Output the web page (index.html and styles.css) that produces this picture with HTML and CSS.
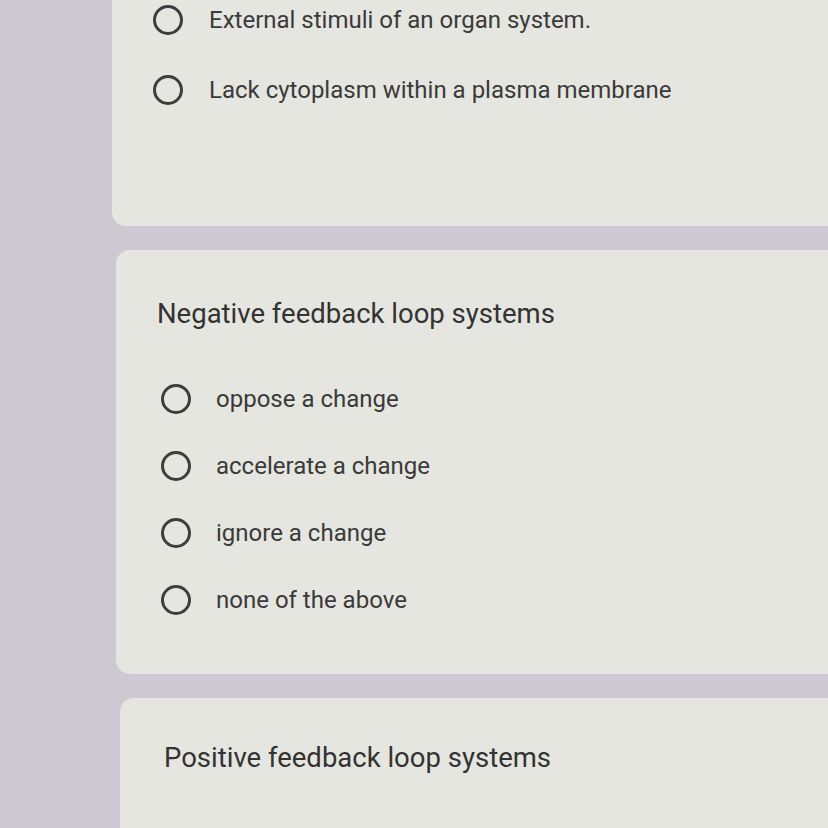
FILE: index.html
```html
<!DOCTYPE html>
<html lang="en">
<head>
<meta charset="utf-8">
<title>Form</title>
<link rel="stylesheet" href="styles.css">
</head>
<body>
<div class="page">
  <section class="card card-first">
    <div class="option option-top">
      <span class="radio"></span>
      <span class="label">External stimuli of an organ system.</span>
    </div>
    <div class="option option-second">
      <span class="radio"></span>
      <span class="label">Lack cytoplasm within a plasma membrane</span>
    </div>
  </section>

  <section class="card card-second">
    <h2 class="question">Negative feedback loop systems</h2>
    <div class="options">
      <div class="option"><span class="radio"></span><span class="label">oppose a change</span></div>
      <div class="option"><span class="radio"></span><span class="label">accelerate a change</span></div>
      <div class="option"><span class="radio"></span><span class="label">ignore a change</span></div>
      <div class="option"><span class="radio"></span><span class="label">none of the above</span></div>
    </div>
  </section>

  <section class="card card-third">
    <h2 class="question">Positive feedback loop systems</h2>
  </section>
</div>
</body>
</html>
```

FILE: styles.css
```css
html, body {
  margin: 0;
  padding: 0;
}
body {
  background: #cdc9d2;
  font-family: Roboto, "Liberation Sans", sans-serif;
  color: #3b3b3b;
  overflow: hidden;
  height: 828px;
}
.page {
  display: flex;
  flex-direction: column;
  gap: 24px;
}
.card {
  background: #e5e6df;
  box-sizing: border-box;
}
.card-first {
  margin-left: 112px;
  height: 226px;
  padding: 5px 0 0 41px;
  border-radius: 0 0 0 14px;
}
.card-second {
  margin-left: 116px;
  height: 424px;
  padding: 47px 0 0 41px;
  border-radius: 14px 0 0 14px;
}
.card-third {
  margin-left: 120px;
  height: 160px;
  padding: 43px 0 0 44px;
  border-radius: 14px 0 0 0;
}
.question {
  margin: 0;
  font-weight: 400;
  font-size: 27.5px;
  line-height: 34px;
  color: #333;
}
.options {
  display: flex;
  flex-direction: column;
  gap: 37px;
  margin-top: 53px;
  padding-left: 4px;
}
.option {
  display: flex;
  align-items: center;
  height: 30px;
}
.option-second {
  margin-top: 40px;
}
.card-first .label {
  font-size: 24px;
  margin-left: 26px;
}
.radio {
  width: 30px;
  height: 30px;
  box-sizing: border-box;
  border: 3px solid #3d3d3d;
  border-radius: 50%;
  flex: none;
}
.label {
  margin-left: 25px;
  font-size: 24px;
  color: #3a3a3a;
}
```
